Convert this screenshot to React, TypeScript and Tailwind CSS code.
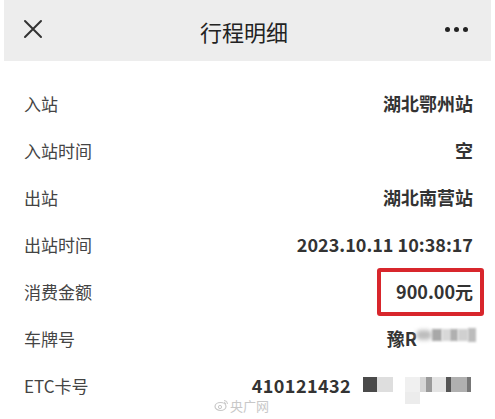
import React from "react";

const font = { fontFamily: '"Noto Sans CJK SC", "Noto Sans", sans-serif' };

function Row({ label, children }: { label: string; children: React.ReactNode }) {
  return (
    <div className="flex h-[47px] items-center justify-between pl-[24px] pr-[22px]">
      <span className="text-[17px] text-[#444]">{label}</span>
      <div className="flex items-center text-[18px] font-bold text-[#333]">{children}</div>
    </div>
  );
}

export default function App() {
  return (
    <div className="relative h-[419px] w-[495px] overflow-hidden bg-white" style={font}>
      <div className="mx-[4px] flex h-[61px] items-center justify-between bg-[#ededed] px-[18px]">
        <svg width="20" height="20" viewBox="0 0 20 20" className="ml-[1px] mt-[-3px]">
          <path d="M2 2 L18 18 M18 2 L2 18" stroke="#333" strokeWidth="2" strokeLinecap="round" />
        </svg>
        <span className="mt-[2px] text-[22px] text-[#222]">行程明细</span>
        <div className="mr-[5px] mt-[-3px] flex gap-[4px]">
          <span className="h-[5px] w-[5px] rounded-full bg-[#222]" />
          <span className="h-[5px] w-[5px] rounded-full bg-[#222]" />
          <span className="h-[5px] w-[5px] rounded-full bg-[#222]" />
        </div>
      </div>
      <div className="pt-[19px]">
        <Row label="入站">湖北鄂州站</Row>
        <Row label="入站时间">空</Row>
        <Row label="出站">湖北南营站</Row>
        <Row label="出站时间">2023.10.11 10:38:17</Row>
        <Row label="消费金额">
          <span className="relative">
            900.00元
            <span className="absolute right-[-11px] top-1/2 h-[48px] w-[107px] -translate-y-1/2 rounded-[3px] border-[4px] border-[#d8262c]" />
          </span>
        </Row>
        <Row label="车牌号">
          <span className="mr-[56px]">豫R</span>
        </Row>
        <Row label="ETC卡号">
          <span className="mr-[122px] tracking-[0.4px]">410121432</span>
        </Row>
      </div>
      {/* plate mosaic */}
      <div className="absolute left-[416px] top-[327px] flex h-[16px] items-center">
        <span className="h-[10px] w-[16px] rounded-full bg-[#bdbdbd] blur-[2px]" />
        <span className="h-[12px] w-[10px] bg-[#a8a8a8] blur-[1px]" />
        <span className="h-[12px] w-[8px] bg-[#d8d8d8] blur-[1px]" />
        <span className="h-[12px] w-[8px] bg-[#b0b0b0] blur-[1px]" />
        <span className="h-[12px] w-[10px] bg-[#d0d0d0] blur-[1px]" />
        <span className="h-[14px] w-[8px] bg-[#bcbcbc] blur-[1px]" />
      </div>
      {/* etc mosaic */}
      <div className="absolute left-[363px] top-[377px] flex h-[15px]">
        <span className="h-[15px] w-[14px] bg-[#4a4a4a]" />
        <span className="h-[15px] w-[16px] bg-[#dedede]" />
        <span className="h-[15px] w-[12px] bg-white" />
        <span className="h-[15px] w-[15px] bg-[#f0f0f0]" />
        <span className="h-[15px] w-[6px] bg-[#d6d6d6]" />
        <span className="h-[15px] w-[6px] bg-[#9a9a9a]" />
        <span className="h-[15px] w-[14px] bg-[#e4e4e4]" />
        <span className="h-[15px] w-[5px] bg-[#555]" />
        <span className="h-[15px] w-[16px] bg-[#b0b0b0]" />
        <span className="h-[15px] w-[4px] bg-[#777]" />
      </div>
      <div className="absolute left-[405px] top-[392px] h-[12px] w-[15px] bg-[#ececec]" />
      {/* watermark */}
      <div className="absolute left-[214px] top-[398px] flex items-center gap-[1px] text-[#c8c8c8]">
        <svg width="15" height="14" viewBox="0 0 15 14">
          <ellipse cx="6.5" cy="8.5" rx="5.5" ry="4" fill="none" stroke="#c8c8c8" strokeWidth="1.2" />
          <circle cx="6" cy="9" r="1.6" fill="none" stroke="#c8c8c8" strokeWidth="1" />
          <path d="M10 2.5 a3.5 3.5 0 0 1 3.5 3.5 M10 4.5 a1.6 1.6 0 0 1 1.6 1.6" fill="none" stroke="#c8c8c8" strokeWidth="1" />
        </svg>
        <span className="text-[13px] leading-none">央广网</span>
      </div>
    </div>
  );
}
